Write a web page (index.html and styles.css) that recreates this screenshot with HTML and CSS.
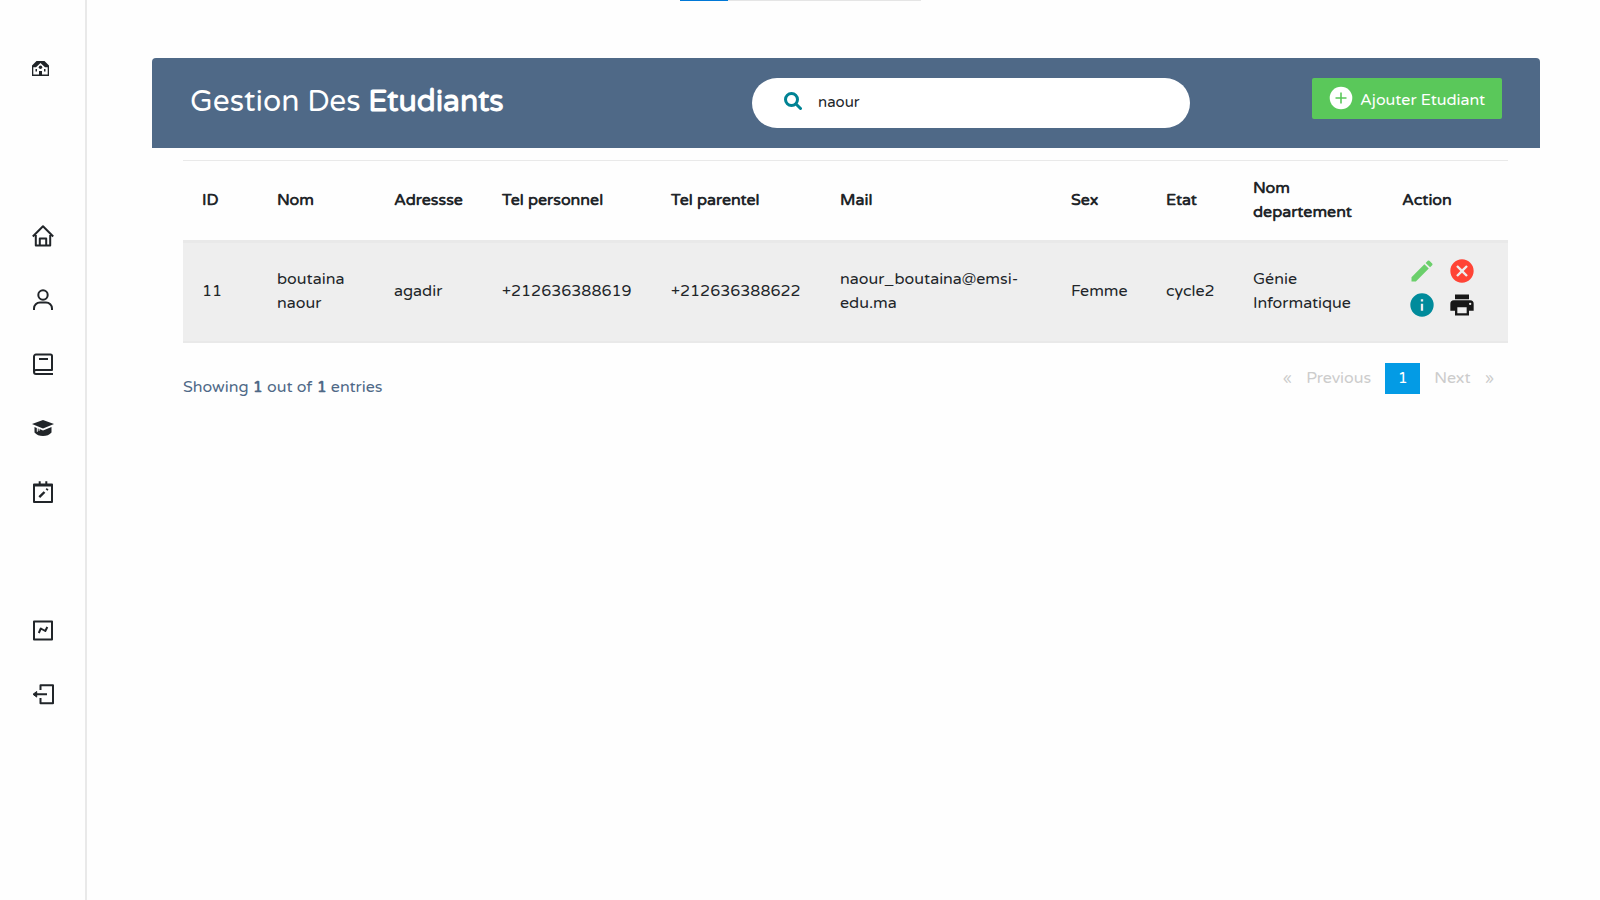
FILE: index.html
```html
<!DOCTYPE html>
<html lang="fr">
<head>
<meta charset="utf-8">
<meta name="viewport" content="width=device-width, initial-scale=1">
<title>Gestion Des Etudiants</title>
<link rel="stylesheet" href="styles.css">
</head>
<body>
<div class="progress" aria-hidden="true"><span></span></div>
<div class="app">
  <aside class="sidebar">
    <a class="brand" href="#" aria-label="Ecole">
      <svg viewBox="0 0 17 15" width="17" height="15"><path d="M4.500 0h8L17 4.500V15H0V4.500zM1.300 6.300v7.200H7V10h3v3.500h5.700V6.300H13L8.500 2 4 6.300z" fill-rule="evenodd"/><path d="M3.500 8h1.500v2.500H3.500zM12 8h1.500v2.500H12z"/><circle cx="8.500" cy="6.200" r="1.700"/></svg>
    </a>
    <nav class="group">
      <a href="#" aria-label="Accueil"><svg class="line" viewBox="0 0 24 24"><path d="M1.800 12.500 12 2.300l10.200 10.200M4.800 11v10.500h14.400V11M8.800 21v-6.500h6.400V21"/></svg></a>
      <a href="#" aria-label="Etudiants"><svg class="line" viewBox="0 0 24 24"><circle cx="12" cy="7" r="4.700"/><path d="M3 22v-1.500a6 6 0 0 1 6-6h6a6 6 0 0 1 6 6V22"/></svg></a>
      <a href="#" aria-label="Cours"><svg class="line" viewBox="0 0 24 24"><path d="M22 22H5a2 2 0 0 1-2-2V4.500A2 2 0 0 1 5 2.500h14.500a1.500 1.500 0 0 1 1.500 1.500v14H5a2 2 0 0 0-2 2M8 7h9"/></svg></a>
      <a href="#" aria-label="Filières"><svg viewBox="0 0 24 24"><path d="m12 4 11 4-11 4.500L1 8z"/><path d="M3.500 11 5.800 12v3.800h1v-3.400l.8.300v2h1v-1.600l3.400 1.400 8.500-3.500v5.500c-2 2.500-5 3.500-8.500 3.500s-6.500-1-8.500-3.500z"/></svg></a>
      <a href="#" aria-label="Calendrier"><svg class="line" viewBox="0 0 24 24"><path d="M3 4.500h18V22H3zM3 5.500h18M8.700 1.200V4M15.300 1.200V4"/><path d="m8.300 17.200 5.200-5.200M15.500 10l1.200-1.200" stroke-width="2.400"/></svg></a>
    </nav>
    <nav class="group">
      <a href="#" aria-label="Statistiques"><svg class="line" viewBox="0 0 24 24"><path d="M3 3.500h18v18H3z"/><path d="m7.800 15 2-4.500 4.500 2.500L16.300 9"/></svg></a>
      <a href="#" aria-label="Déconnexion"><svg class="line" viewBox="0 0 24 24"><path d="M9.500 8V3.300H22v18H9.500V16M5 12.300h11"/><path d="m2 12.300 3.700-2.800v5.600z" fill="currentColor" stroke-width="1"/></svg></a>
    </nav>
  </aside>

  <main class="content">
    <section class="card">
      <header class="card-head">
        <h1>Gestion Des <b>Etudiants</b></h1>
        <label class="search">
          <svg viewBox="0 0 18 18" width="18" height="18" aria-hidden="true"><circle cx="7.500" cy="7.500" r="6"/><path d="m12 12 4.500 4.500"/></svg>
          <input type="text" value="naour" aria-label="Rechercher">
        </label>
        <button class="add" type="button">
          <svg viewBox="0 0 24 24" width="24" height="24" aria-hidden="true"><circle cx="12" cy="12" r="11.300" fill="#fff"/><path d="M12 6.500v11M6.500 12h11" stroke="#5ac85a" stroke-width="1.600"/></svg>
          <span>Ajouter Etudiant</span>
        </button>
      </header>

      <div class="card-body">
        <table>
          <colgroup><col class="c-id"><col class="c-nom"><col class="c-adr"><col class="c-tel"><col class="c-tel"><col class="c-mail"><col class="c-sex"><col class="c-etat"><col class="c-dep"><col></colgroup>
          <thead>
            <tr><th>ID</th><th>Nom</th><th>Adressse</th><th>Tel personnel</th><th>Tel parentel</th><th>Mail</th><th>Sex</th><th>Etat</th><th>Nom departement</th><th>Action</th></tr>
          </thead>
          <tbody>
            <tr>
              <td>11</td><td>boutaina naour</td><td>agadir</td><td>+212636388619</td><td>+212636388622</td><td>naour_boutaina@emsi-<wbr>edu.ma</td><td>Femme</td><td>cycle2</td><td>Génie Informatique</td>
              <td>
                <div class="actions">
                  <button type="button" class="edit" aria-label="Modifier"><svg viewBox="0 0 24 24"><path d="M3 17.250V21h3.750L17.810 9.940l-3.750-3.750zM20.710 7.040a1 1 0 0 0 0-1.410l-2.340-2.340a1 1 0 0 0-1.410 0l-1.830 1.830 3.750 3.750z"/></svg></button>
                  <button type="button" class="delete" aria-label="Supprimer"><svg viewBox="0 0 24 24"><path d="M12 2C6.470 2 2 6.470 2 12s4.470 10 10 10 10-4.470 10-10S17.530 2 12 2zm5 13.590L15.590 17 12 13.410 8.410 17 7 15.590 10.590 12 7 8.410 8.410 7 12 10.590 15.590 7 17 8.410 13.410 12z"/></svg></button>
                  <button type="button" class="info" aria-label="Détails"><svg viewBox="0 0 24 24"><path d="M12 2a10 10 0 1 0 0 20 10 10 0 0 0 0-20zm1 15h-2v-6h2zm0-8h-2V7h2z"/></svg></button>
                  <button type="button" class="print" aria-label="Imprimer"><svg viewBox="0 0 24 24"><path d="M19 8H5a3 3 0 0 0-3 3v6h4v4h12v-4h4v-6a3 3 0 0 0-3-3zm-3 11H8v-5h8zm3-7a1 1 0 1 1 0-2 1 1 0 0 1 0 2zM18 3H6v4h12z"/></svg></button>
                </div>
              </td>
            </tr>
          </tbody>
        </table>
        <footer class="table-foot">
          <p>Showing <b>1</b> out of <b>1</b> entries</p>
          <nav class="pages" aria-label="Pagination">
            <a href="#" aria-label="Première page">«</a><a href="#">Previous</a><a class="active" href="#">1</a><a href="#">Next</a><a href="#" aria-label="Dernière page">»</a>
          </nav>
        </footer>
      </div>
    </section>
  </main>
</div>
</body>
</html>
```
FILE: styles.css
```css
* { box-sizing: border-box; }

body {
  margin: 0;
  background: #fefefe;
  color: #212529;
  font: 16px/24px "Varela Round", "Noto Sans", sans-serif;
}

a { color: inherit; text-decoration: none; }
b { font-weight: 700; }
button { border: 0; padding: 0; background: none; font: inherit; cursor: pointer; }

.progress {
  position: absolute;
  top: 0;
  left: 680px;
  width: 241px;
  height: 1px;
  background: #e5e5e5;
}
.progress span { display: block; width: 20%; height: 1px; background: #0078d7; }

.app { display: flex; min-height: 100vh; }

.sidebar {
  flex: none;
  width: 87px;
  padding-top: 61px;
  border-right: 2px solid #e9e9e9;
}
.brand { display: block; height: 163px; padding-left: 32px; }
.sidebar svg { display: block; fill: currentColor; }
.group { display: grid; gap: 40px; margin-bottom: 114px; padding-left: 31px; }
.group a { display: block; width: 24px; height: 24px; }
.sidebar .line {
  fill: none;
  stroke: currentColor;
  stroke-width: 2;
  stroke-linejoin: round;
}

.content { flex: 1; padding: 58px 60px 0 65px; }

.card { padding-bottom: 48px; border-radius: 4px; }
.card-head {
  display: grid;
  grid-template-columns: 562px minmax(200px, 438px) 1fr;
  align-items: start;
  padding: 20px 38px;
  border-radius: 4px 4px 0 0;
  background: #4f6987;
  color: #fff;
}
h1 { margin: 0; font-size: 30px; font-weight: 400; line-height: 48px; white-space: nowrap; }

.search {
  display: flex;
  gap: 16px;
  height: 50px;
  padding: 14px 32px;
  border-radius: 25px;
  background: #fff;
}
.search svg { flex: none; fill: none; stroke: #008394; stroke-width: 3; stroke-linecap: round; }
.search input {
  flex: 1;
  min-width: 0;
  height: 20px;
  padding: 0;
  border: 0;
  outline: 0;
  background: none;
  color: #212529;
  font: 15px/20px "Varela Round", "Noto Sans", sans-serif;
}

.add {
  display: flex;
  justify-self: end;
  gap: 7px;
  width: 190px;
  height: 41px;
  padding: 8px 0 0 17px;
  border-radius: 2px;
  background: #5ac85a;
  color: #fff;
  white-space: nowrap;
}
.add svg { flex: none; }
.add span { padding-top: 2px; }

.card-body { padding: 12px 32px 0 31px; }

table { width: 100%; border-collapse: separate; border-spacing: 0; table-layout: fixed; }
th, td { padding: 0 0 2px 19px; text-align: left; vertical-align: middle; }
th { height: 83px; border-top: 1px solid #e9e9e9; border-bottom: 3px solid #e9e9e9; font-weight: 700; }
td { height: 100px; border-bottom: 2px solid #e9e9e9; background: #eee; }
.c-id { width: 75px; }
.c-nom { width: 117px; }
.c-adr { width: 108px; }
.c-tel { width: 169px; }
.c-mail { width: 231px; }
.c-sex { width: 95px; }
.c-etat { width: 87px; }
.c-dep { width: 149px; }
td:nth-child(2), th:nth-child(9), td:nth-child(9) { padding-right: 20px; }

.actions {
  display: grid;
  grid-template-columns: 28px 28px;
  gap: 6px 12px;
  padding: 0 0 6px 6px;
}
.actions svg { display: block; width: 28px; height: 28px; fill: currentColor; }
.edit { color: #6bcf6b; }
.delete { color: #ff4436; }
.info { color: #008b9b; }
.print { color: #171717; }

.table-foot { display: flex; justify-content: space-between; padding-top: 20px; }
.table-foot p { margin: 12px 0 0; color: #4f6987; }
.pages { display: flex; height: 31px; color: #ccc; }
.pages a { display: block; padding: 3px 7px; line-height: 24px; }
.pages a:last-child { padding-right: 14px; }
.pages .active { width: 35px; margin: 0 7px; background: #039be5; color: #fff; text-align: center; }
```
